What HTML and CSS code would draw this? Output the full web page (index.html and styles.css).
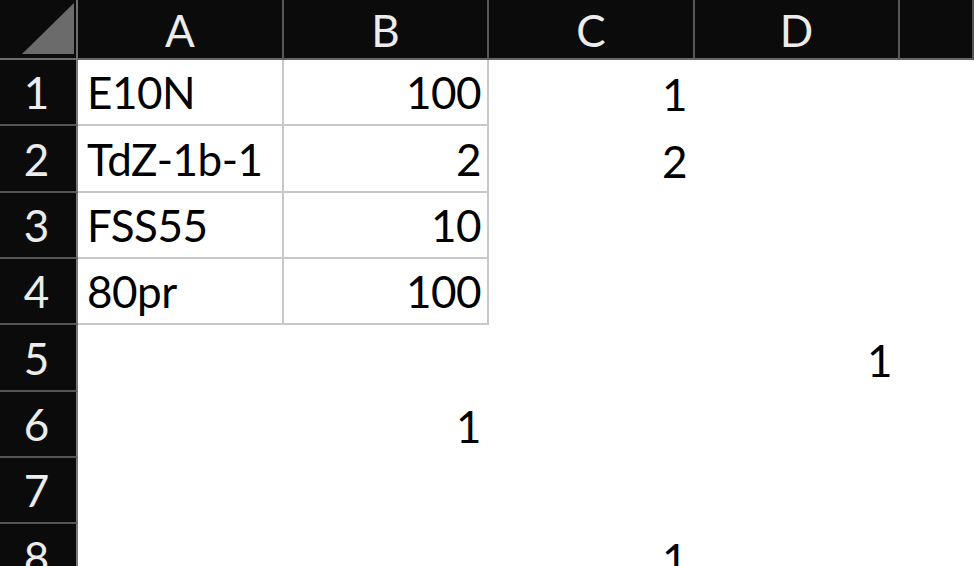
FILE: index.html
```html
<!DOCTYPE html>
<html lang="en">
<head>
    <meta charset="UTF-8">
    <meta name="viewport" content="width=device-width, initial-scale=1.0">
    <title>Sheet1</title>
    <link rel="stylesheet" href="styles.css">
</head>
<body>
    <div class="sheet">
        <div class="corner">
            <svg width="78" height="60" viewBox="0 0 78 60">
                <polygon points="22,54 74,3 74,54" fill="#6b6b6b" />
            </svg>
        </div>
        <div class="col-head">A</div>
        <div class="col-head">B</div>
        <div class="col-head">C</div>
        <div class="col-head">D</div>
        <div class="col-head"></div>

        <div class="row-head">1</div>
        <div class="cell boxed">E10N</div>
        <div class="cell boxed num">100</div>
        <div class="cell num">1</div>
        <div class="cell"></div>
        <div class="cell"></div>

        <div class="row-head">2</div>
        <div class="cell boxed">TdZ-1b-1</div>
        <div class="cell boxed num">2</div>
        <div class="cell num">2</div>
        <div class="cell"></div>
        <div class="cell"></div>

        <div class="row-head">3</div>
        <div class="cell boxed">FSS55</div>
        <div class="cell boxed num">10</div>
        <div class="cell"></div>
        <div class="cell"></div>
        <div class="cell"></div>

        <div class="row-head">4</div>
        <div class="cell boxed">80pr</div>
        <div class="cell boxed num">100</div>
        <div class="cell"></div>
        <div class="cell"></div>
        <div class="cell"></div>

        <div class="row-head">5</div>
        <div class="cell"></div>
        <div class="cell"></div>
        <div class="cell"></div>
        <div class="cell num">1</div>
        <div class="cell"></div>

        <div class="row-head">6</div>
        <div class="cell"></div>
        <div class="cell num">1</div>
        <div class="cell"></div>
        <div class="cell"></div>
        <div class="cell"></div>

        <div class="row-head">7</div>
        <div class="cell"></div>
        <div class="cell"></div>
        <div class="cell"></div>
        <div class="cell"></div>
        <div class="cell"></div>

        <div class="row-head">8</div>
        <div class="cell"></div>
        <div class="cell"></div>
        <div class="cell num">1</div>
        <div class="cell"></div>
        <div class="cell"></div>
    </div>
</body>
</html>
```

FILE: styles.css
```css
* {
    margin: 0;
    padding: 0;
    box-sizing: border-box;
}

body {
    background: #fff;
    overflow: hidden;
    font-family: Lato, 'Open Sans', sans-serif;
    font-size: 44px;
    line-height: 1;
}

.sheet {
    display: grid;
    grid-template-columns: 78px 206px 205px 206px 205px 1fr;
    grid-template-rows: 60px repeat(8, 66.33px);
}

.corner {
    background: #0b0b0b;
    border-right: 2px solid #6e6e6e;
    border-bottom: 2px solid #6e6e6e;
}

.corner svg {
    display: block;
}

.col-head {
    background: #0b0b0b;
    color: #ececec;
    text-align: center;
    padding-top: 8px;
    border-right: 2px solid #575757;
    border-bottom: 2px solid #666;
}

.row-head {
    background: #0b0b0b;
    color: #ececec;
    display: flex;
    justify-content: center;
    align-items: flex-end;
    padding: 0 3px 10px 0;
    border-right: 2px solid #7a7a7a;
    border-bottom: 2px solid #555;
}

.cell {
    color: #000;
    display: flex;
    align-items: flex-end;
    padding: 0 8px 10px 9px;
    letter-spacing: -0.5px;
}

.cell.num {
    justify-content: flex-end;
}

.cell.boxed {
    border-right: 2px solid #c8c8c8;
    border-bottom: 2px solid #c8c8c8;
}

.cell.boxed.num {
    padding-right: 6px;
}
```
